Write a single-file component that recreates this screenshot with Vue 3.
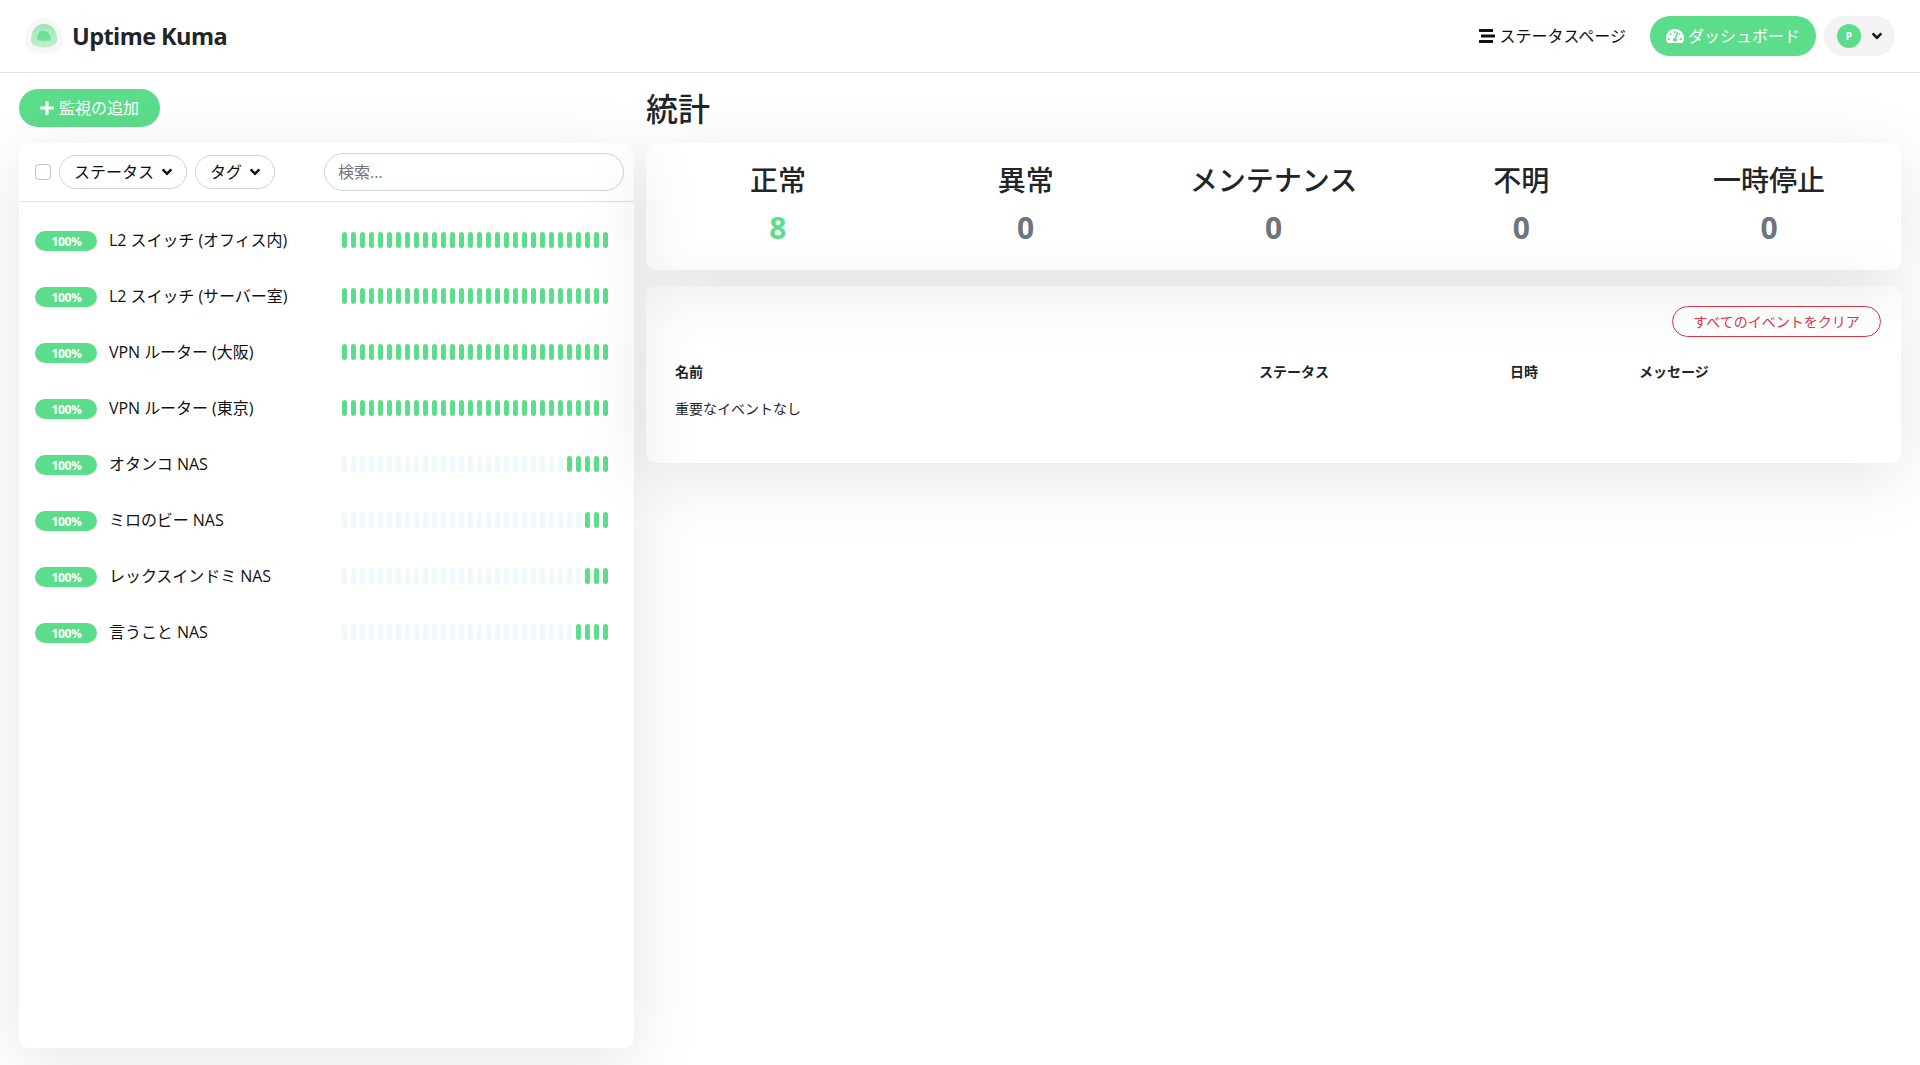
<template>
  <div class="layout">
    <header class="header">
      <a class="brand" href="#">
        <svg class="logo" viewBox="0 0 38 36">
          <defs>
            <linearGradient id="logoMiddle" x1="0" y1="0" x2="0" y2="1">
              <stop offset="0" stop-color="#9ee6b7" />
              <stop offset="1" stop-color="#c2eed0" />
            </linearGradient>
            <linearGradient id="logoInner" x1="0" y1="0" x2="0" y2="1">
              <stop offset="0" stop-color="#62de8f" />
              <stop offset="1" stop-color="#7be3a1" />
            </linearGradient>
          </defs>
          <path class="logo-outer" d="M19 0C30 0 38 10 38 21c0 10-7 14.500-19 14.500S0 31 0 21C0 10 8 0 19 0z" />
          <path fill="url(#logoMiddle)" d="M19 5.700c7.500 0 13.200 6.800 13.200 15.300 0 5.500-5 8.500-13.200 8.500S6 27.500 6 21.500C6 12.500 11.500 5.700 19 5.700z" />
          <path fill="url(#logoInner)" d="M18 13c4.500 0 8 3.500 8 9.300-1.500.6-3.500.6-6.500.6-3.500 0-7-.1-7.500-1.400C12 16.500 14 13 18 13z" />
        </svg>
        <span class="title">Uptime Kuma</span>
      </a>
      <nav class="nav">
        <a class="nav-link" href="#">
          <svg class="icon" viewBox="0 0 512 512"><path :d="icons.stream" /></svg>
          <span>ステータスページ</span>
        </a>
        <a class="nav-link active" href="#">
          <svg class="icon gauge" viewBox="0 0 576 512"><path :d="icons.gauge" /></svg>
          <span>ダッシュボード</span>
        </a>
        <div class="profile">
          <div class="profile-pic">P</div>
          <svg class="icon angle" viewBox="0 0 320 512"><path :d="icons.angle" /></svg>
        </div>
      </nav>
    </header>

    <main class="main">
      <section class="left">
        <button class="btn-add" type="button">
          <svg class="icon plus" viewBox="0 0 448 512"><path :d="icons.plus" /></svg>
          <span>監視の追加</span>
        </button>
        <div class="shadow-box list">
          <div class="list-header">
            <input class="check" type="checkbox" />
            <button v-for="filter in filters" :key="filter" class="filter" type="button">
              <span>{{ filter }}</span>
              <svg class="icon angle" viewBox="0 0 320 512"><path :d="icons.angle" /></svg>
            </button>
            <input class="search" type="text" placeholder="検索..." />
          </div>
          <div class="monitors">
            <div v-for="monitor in monitors" :key="monitor.name" class="item">
              <span class="badge">100%</span>
              <span class="name">{{ monitor.name }}</span>
              <div class="heartbeat">
                <div
                  v-for="n in beatCount"
                  :key="n"
                  class="beat"
                  :class="{ empty: n <= beatCount - monitor.beats }"
                ></div>
              </div>
            </div>
          </div>
        </div>
      </section>

      <section class="right">
        <h1>統計</h1>
        <div class="shadow-box stats">
          <div v-for="stat in stats" :key="stat.label" class="stat">
            <h3>{{ stat.label }}</h3>
            <span class="num" :class="{ up: stat.up }">{{ stat.value }}</span>
          </div>
        </div>
        <div class="shadow-box events">
          <button class="btn-clear" type="button">すべてのイベントをクリア</button>
          <table>
            <thead>
              <tr>
                <th class="col-name">名前</th>
                <th class="col-status">ステータス</th>
                <th class="col-time">日時</th>
                <th>メッセージ</th>
              </tr>
            </thead>
            <tbody>
              <tr>
                <td colspan="4">重要なイベントなし</td>
              </tr>
            </tbody>
          </table>
        </div>
      </section>
    </main>
  </div>
</template>

<script setup>
const beatCount = 30

const filters = ['ステータス', 'タグ']

const monitors = [
  { name: 'L2 スイッチ (オフィス内)', beats: 30 },
  { name: 'L2 スイッチ (サーバー室)', beats: 30 },
  { name: 'VPN ルーター (大阪)', beats: 30 },
  { name: 'VPN ルーター (東京)', beats: 30 },
  { name: 'オタンコ NAS', beats: 5 },
  { name: 'ミロのビー NAS', beats: 3 },
  { name: 'レックスインドミ NAS', beats: 3 },
  { name: '言うこと NAS', beats: 4 },
]

const stats = [
  { label: '正常', value: 8, up: true },
  { label: '異常', value: 0 },
  { label: 'メンテナンス', value: 0 },
  { label: '不明', value: 0 },
  { label: '一時停止', value: 0 },
]

const icons = {
  plus: 'M416 208H272V64c0-17.67-14.33-32-32-32h-32c-17.67 0-32 14.33-32 32v144H32c-17.67 0-32 14.33-32 32v32c0 17.67 14.33 32 32 32h144v144c0 17.67 14.33 32 32 32h32c17.67 0 32-14.33 32-32V304h144c17.67 0 32-14.33 32-32v-32c0-17.67-14.33-32-32-32z',
  angle: 'M143 352.3L7 216.3c-9.4-9.4-9.4-24.6 0-33.9l22.6-22.6c9.4-9.4 24.6-9.4 33.9 0l96.4 96.4 96.4-96.4c9.4-9.4 24.6-9.4 33.9 0l22.6 22.6c9.4 9.4 9.4 24.6 0 33.9l-136 136c-9.2 9.4-24.4 9.4-33.8 0z',
  stream: 'M16 128h416c8.84 0 16-7.16 16-16V48c0-8.84-7.16-16-16-16H16C7.16 32 0 39.16 0 48v64c0 8.84 7.16 16 16 16zm480 80H80c-8.84 0-16 7.16-16 16v64c0 8.84 7.16 16 16 16h416c8.84 0 16-7.16 16-16v-64c0-8.84-7.16-16-16-16zm-64 176H16c-8.84 0-16 7.16-16 16v64c0 8.84 7.16 16 16 16h416c8.84 0 16-7.16 16-16v-64c0-8.84-7.16-16-16-16z',
  gauge: 'M288 32C128.94 32 0 160.94 0 320c0 52.8 14.25 102.26 39.06 144.8 5.61 9.62 16.3 15.2 27.44 15.2h443c11.14 0 21.83-5.58 27.44-15.2C561.75 422.26 576 372.8 576 320c0-159.06-128.94-288-288-288zm0 64c14.71 0 26.58 10.13 30.32 23.65-1.11 2.26-2.64 4.23-3.45 6.67l-9.22 27.67c-5.13 3.49-10.97 6.01-17.64 6.01-17.67 0-32-14.33-32-32S270.33 96 288 96zM96 384c-17.67 0-32-14.33-32-32s14.33-32 32-32 32 14.33 32 32-14.33 32-32 32zm48-160c-17.67 0-32-14.33-32-32s14.33-32 32-32 32 14.33 32 32-14.33 32-32 32zm246.77-72.41l-61.33 184C343.13 347.33 352 364.54 352 384c0 11.72-3.38 22.55-8.88 32H232.88c-5.5-9.45-8.88-20.28-8.88-32 0-33.94 26.5-61.43 59.9-63.59l61.34-184.01c4.17-12.56 17.73-19.45 30.36-15.17 12.57 4.19 19.35 17.79 15.17 30.36zm14.66 57.2l15.52-46.55c3.47-1.29 7.13-2.23 11.05-2.23 17.67 0 32 14.33 32 32s-14.33 32-32 32c-11.38-.01-20.89-6.28-26.57-15.22zM480 384c-17.67 0-32-14.33-32-32s14.33-32 32-32 32 14.33 32 32-14.33 32-32 32z',
}
</script>

<style>
body {
  margin: 0;
  background: #fff;
  overflow: hidden;
}
</style>

<style scoped>
.layout,
.layout * {
  box-sizing: border-box;
}
.layout {
  display: flex;
  flex-direction: column;
  height: 1065px;
  overflow: hidden;
  font-family: "Open Sans", "Noto Sans CJK JP", sans-serif;
  font-size: 16px;
  line-height: 1.5;
  color: #212529;
}
a {
  color: inherit;
  text-decoration: none;
}
button,
input {
  font: inherit;
  margin: 0;
}
.icon {
  height: 16px;
  width: 16px;
  fill: currentColor;
  flex: none;
}
.icon.angle {
  width: 10px;
}
.icon.plus {
  width: 14px;
}
.icon.gauge {
  width: 18px;
}

.header {
  display: flex;
  align-items: center;
  justify-content: space-between;
  height: 73px;
  padding: 0 25px;
  border-bottom: 1px solid #dee2e6;
}
.brand {
  display: flex;
  align-items: center;
  gap: 9px;
}
.logo {
  width: 38px;
  height: 36px;
}
.logo-outer {
  fill: #f7f7f7;
}
.title {
  padding-top: 2px;
  font-size: 23.5px;
  font-weight: 700;
  letter-spacing: -0.58px;
}
.nav {
  display: flex;
  align-items: center;
  gap: 8px;
}
.nav-link {
  display: flex;
  align-items: center;
  gap: 4px;
  height: 40px;
  padding: 0 16px;
  border-radius: 20px;
  color: #111;
}
.nav-link.active {
  background: #5cdd8b;
  color: #fff;
}
.profile {
  display: flex;
  align-items: center;
  gap: 11px;
  height: 40px;
  padding: 0 13px;
  border-radius: 20px;
  background: #f3f3f3;
  color: #111;
}
.profile-pic {
  width: 24px;
  height: 24px;
  border-radius: 50%;
  background: #5cdd8b;
  color: #fff;
  font-size: 10px;
  font-weight: 700;
  line-height: 24px;
  text-align: center;
}

.main {
  flex: 1;
  display: flex;
  gap: 12px;
  padding: 16px 19px 17px;
  min-height: 0;
}
.left {
  display: flex;
  flex-direction: column;
  align-items: flex-start;
  width: 615px;
}
.right {
  flex: 1;
}
.shadow-box {
  border-radius: 10px;
  box-shadow: 0 15px 70px rgba(0, 0, 0, 0.1);
}
.btn-add {
  display: flex;
  align-items: center;
  gap: 5px;
  width: 141px;
  height: 38px;
  padding: 0 21px;
  margin-bottom: 16px;
  border: 0;
  border-radius: 19px;
  background: #5cdd8b;
  color: #fff;
  white-space: nowrap;
}
.list {
  flex: 1;
  width: 100%;
}
.list-header {
  display: flex;
  align-items: center;
  gap: 8px;
  height: 59px;
  padding: 0 10px 0 16px;
  border-bottom: 1px solid #dee2e6;
}
.check {
  appearance: none;
  width: 16px;
  height: 16px;
  border: 1px solid #bfbfbf;
  border-radius: 4px;
  background: #fff;
}
.filter {
  display: flex;
  align-items: center;
  gap: 8px;
  height: 34px;
  padding: 0 14px;
  border: 1px solid #ced4da;
  border-radius: 17px;
  background: none;
  color: #111;
}
.search {
  width: 300px;
  height: 38px;
  margin-left: auto;
  padding: 0 13px;
  border: 1px solid #ced4da;
  border-radius: 19px;
  background: none;
}
.search::placeholder {
  color: #6c757d;
  opacity: 1;
}
.monitors {
  padding: 10px 0;
}
.item {
  display: flex;
  align-items: center;
  height: 56px;
  padding: 0 26px 0 16px;
  color: #111;
}
.badge {
  width: 62px;
  height: 20px;
  margin: 2px 12px 0 0;
  padding-left: 1px;
  border-radius: 10px;
  background: #5cdd8b;
  color: #fff;
  font-size: 12px;
  font-weight: 700;
  letter-spacing: -0.4px;
  line-height: 21px;
  text-align: center;
}
.name {
  letter-spacing: -0.05px;
}
.heartbeat {
  display: flex;
  gap: 4px;
  margin-left: auto;
}
.beat {
  width: 5px;
  height: 16px;
  border-radius: 2.5px;
  background: #5cdd8b;
}
.beat.empty {
  background: aliceblue;
}

h1,
h3 {
  margin: 0;
  font-weight: 500;
  line-height: 1.2;
}
h1 {
  height: 38px;
  margin-bottom: 16px;
  padding-top: 1px;
  font-size: 32px;
}
.stats {
  display: grid;
  grid-template-columns: repeat(5, 1fr);
  height: 127px;
  padding: 21px 8px 19px;
  text-align: center;
}
h3 {
  margin-bottom: 7px;
  font-size: 28px;
}
.num {
  display: block;
  font-size: 30px;
  font-weight: 700;
  color: #6c757d;
}
.num.up {
  color: #5cdd8b;
}
.events {
  display: flex;
  flex-direction: column;
  height: 177px;
  margin-top: 16px;
  padding: 20px;
  font-size: 14px;
}
.btn-clear {
  align-self: flex-end;
  width: 209px;
  height: 31px;
  padding: 0;
  border: 1px solid #dc3545;
  border-radius: 16px;
  background: none;
  color: #dc3545;
}
table {
  width: 100%;
  margin-top: 16px;
  border-collapse: collapse;
  table-layout: fixed;
}
th,
td {
  height: 37px;
  padding: 0 8px;
  text-align: left;
}
th {
  padding-bottom: 1px;
}
th:first-child,
td:first-child {
  padding-left: 9px;
}
.col-name {
  width: 585px;
}
.col-status {
  width: 251px;
}
.col-time {
  width: 129px;
}
</style>
